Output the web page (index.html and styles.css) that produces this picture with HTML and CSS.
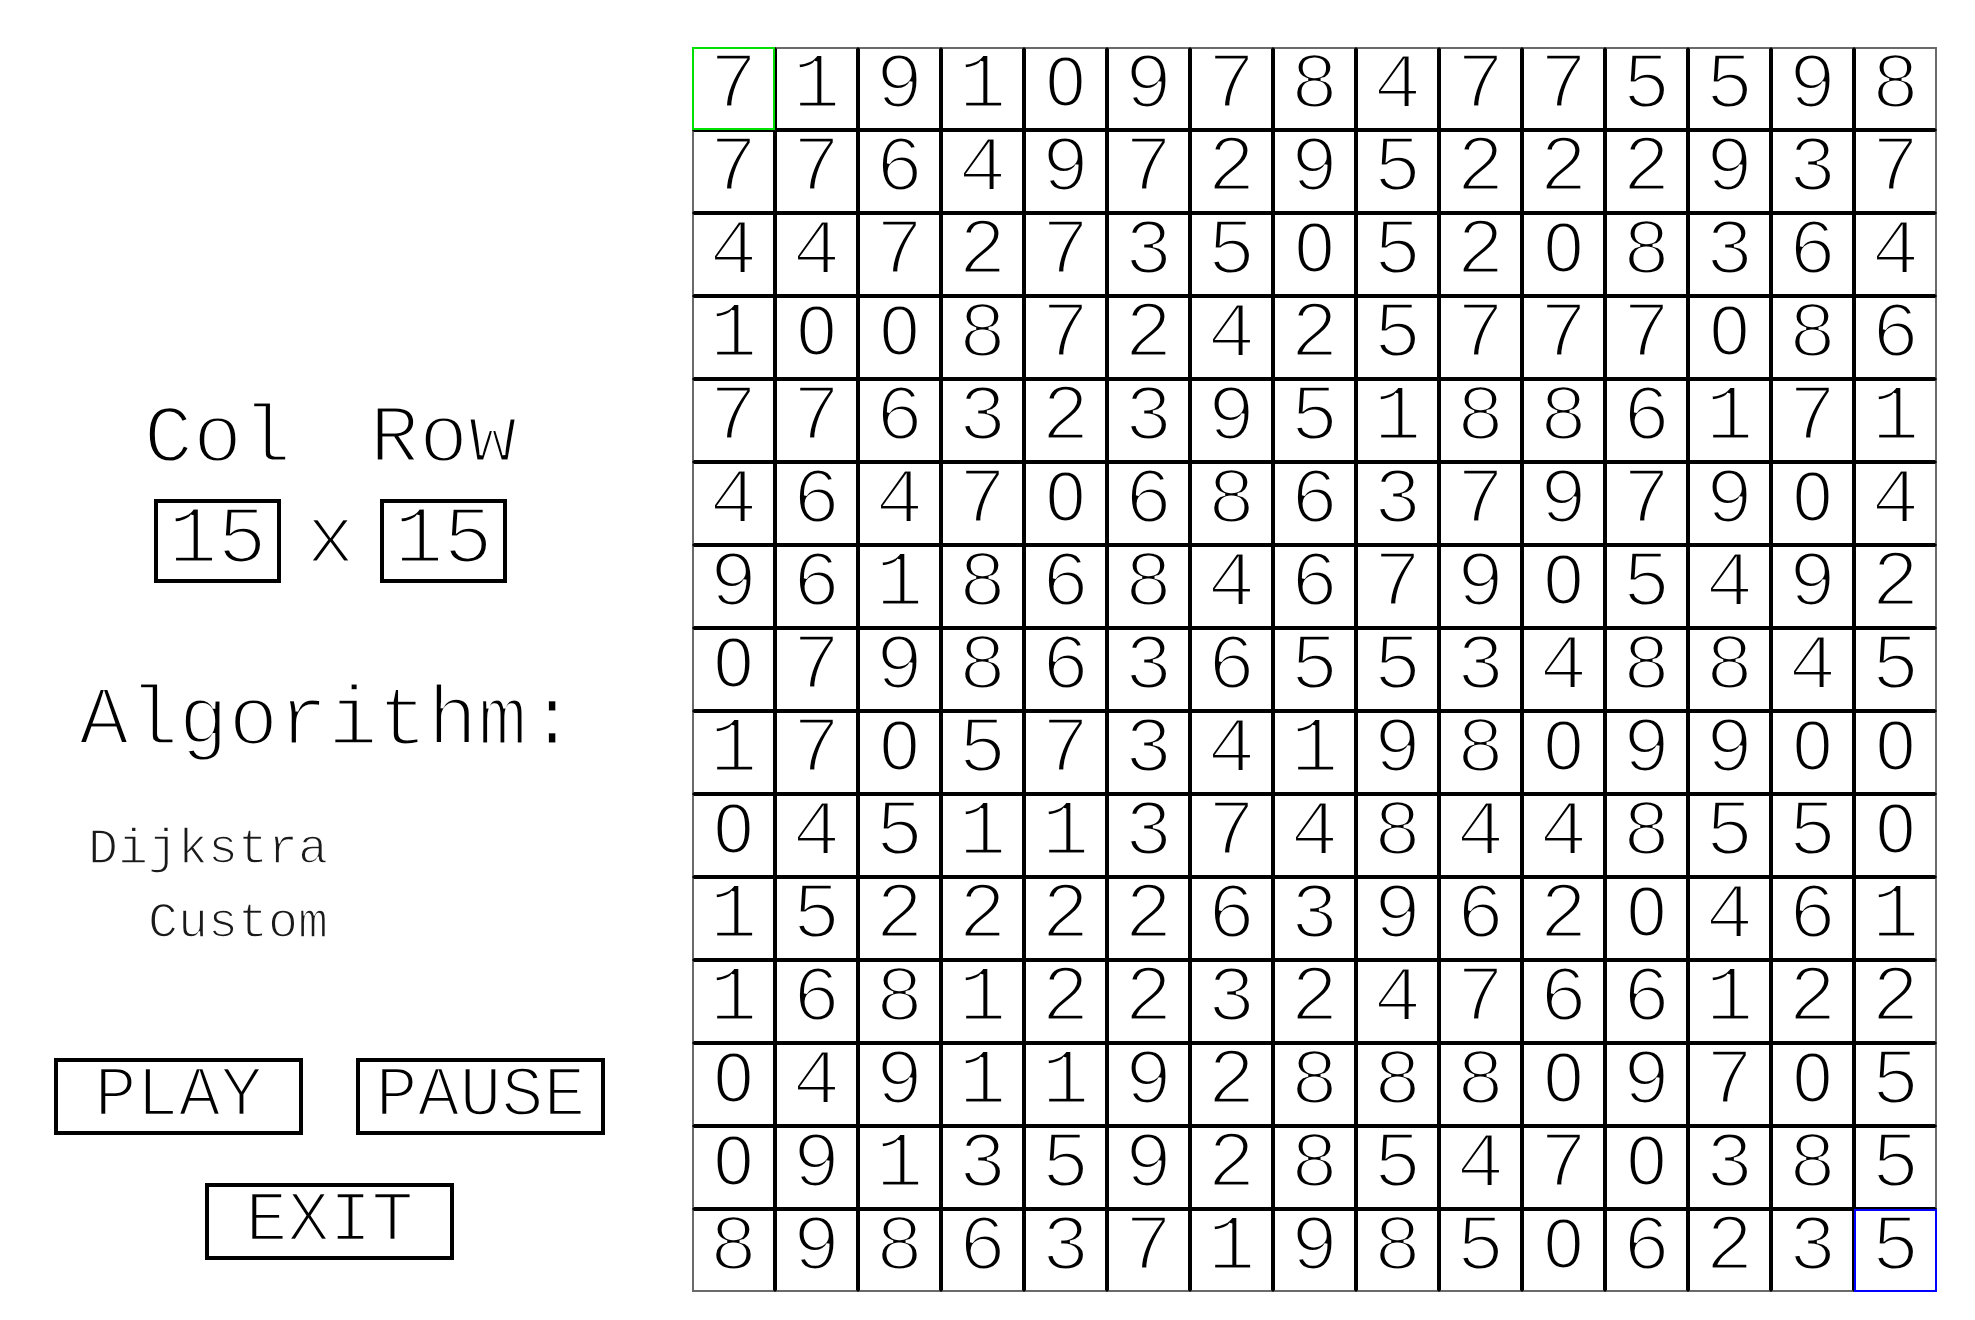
FILE: index.html
```html
<!DOCTYPE html>
<html>
<head>
<meta charset="utf-8">
<link rel="stylesheet" href="styles.css">
</head>
<body>
<div class="app">
  <div class="panel">
    <div class="dims">
      <div class="dim"><div class="dim-label">Col</div><div class="dim-box">15</div></div>
      <div class="times">x</div>
      <div class="dim"><div class="dim-label">Row</div><div class="dim-box">15</div></div>
    </div>
    <div class="algo-title">Algorithm:</div>
    <div class="algo-list">
      <div class="algo-item">Dijkstra</div>
      <div class="algo-item">Custom</div>
    </div>
    <div class="buttons">
      <div class="btn">PLAY</div>
      <div class="btn">PAUSE</div>
    </div>
    <div class="buttons exit-row">
      <div class="btn">EXIT</div>
    </div>
  </div>
  <div class="board">
    <div class="cell start">7</div><div class="cell">1</div><div class="cell">9</div><div class="cell">1</div><div class="cell z">0</div><div class="cell">9</div><div class="cell">7</div><div class="cell">8</div><div class="cell">4</div><div class="cell">7</div><div class="cell">7</div><div class="cell">5</div><div class="cell">5</div><div class="cell">9</div><div class="cell">8</div>
    <div class="cell">7</div><div class="cell">7</div><div class="cell">6</div><div class="cell">4</div><div class="cell">9</div><div class="cell">7</div><div class="cell">2</div><div class="cell">9</div><div class="cell">5</div><div class="cell">2</div><div class="cell">2</div><div class="cell">2</div><div class="cell">9</div><div class="cell">3</div><div class="cell">7</div>
    <div class="cell">4</div><div class="cell">4</div><div class="cell">7</div><div class="cell">2</div><div class="cell">7</div><div class="cell">3</div><div class="cell">5</div><div class="cell z">0</div><div class="cell">5</div><div class="cell">2</div><div class="cell z">0</div><div class="cell">8</div><div class="cell">3</div><div class="cell">6</div><div class="cell">4</div>
    <div class="cell">1</div><div class="cell z">0</div><div class="cell z">0</div><div class="cell">8</div><div class="cell">7</div><div class="cell">2</div><div class="cell">4</div><div class="cell">2</div><div class="cell">5</div><div class="cell">7</div><div class="cell">7</div><div class="cell">7</div><div class="cell z">0</div><div class="cell">8</div><div class="cell">6</div>
    <div class="cell">7</div><div class="cell">7</div><div class="cell">6</div><div class="cell">3</div><div class="cell">2</div><div class="cell">3</div><div class="cell">9</div><div class="cell">5</div><div class="cell">1</div><div class="cell">8</div><div class="cell">8</div><div class="cell">6</div><div class="cell">1</div><div class="cell">7</div><div class="cell">1</div>
    <div class="cell">4</div><div class="cell">6</div><div class="cell">4</div><div class="cell">7</div><div class="cell z">0</div><div class="cell">6</div><div class="cell">8</div><div class="cell">6</div><div class="cell">3</div><div class="cell">7</div><div class="cell">9</div><div class="cell">7</div><div class="cell">9</div><div class="cell z">0</div><div class="cell">4</div>
    <div class="cell">9</div><div class="cell">6</div><div class="cell">1</div><div class="cell">8</div><div class="cell">6</div><div class="cell">8</div><div class="cell">4</div><div class="cell">6</div><div class="cell">7</div><div class="cell">9</div><div class="cell z">0</div><div class="cell">5</div><div class="cell">4</div><div class="cell">9</div><div class="cell">2</div>
    <div class="cell z">0</div><div class="cell">7</div><div class="cell">9</div><div class="cell">8</div><div class="cell">6</div><div class="cell">3</div><div class="cell">6</div><div class="cell">5</div><div class="cell">5</div><div class="cell">3</div><div class="cell">4</div><div class="cell">8</div><div class="cell">8</div><div class="cell">4</div><div class="cell">5</div>
    <div class="cell">1</div><div class="cell">7</div><div class="cell z">0</div><div class="cell">5</div><div class="cell">7</div><div class="cell">3</div><div class="cell">4</div><div class="cell">1</div><div class="cell">9</div><div class="cell">8</div><div class="cell z">0</div><div class="cell">9</div><div class="cell">9</div><div class="cell z">0</div><div class="cell z">0</div>
    <div class="cell z">0</div><div class="cell">4</div><div class="cell">5</div><div class="cell">1</div><div class="cell">1</div><div class="cell">3</div><div class="cell">7</div><div class="cell">4</div><div class="cell">8</div><div class="cell">4</div><div class="cell">4</div><div class="cell">8</div><div class="cell">5</div><div class="cell">5</div><div class="cell z">0</div>
    <div class="cell">1</div><div class="cell">5</div><div class="cell">2</div><div class="cell">2</div><div class="cell">2</div><div class="cell">2</div><div class="cell">6</div><div class="cell">3</div><div class="cell">9</div><div class="cell">6</div><div class="cell">2</div><div class="cell z">0</div><div class="cell">4</div><div class="cell">6</div><div class="cell">1</div>
    <div class="cell">1</div><div class="cell">6</div><div class="cell">8</div><div class="cell">1</div><div class="cell">2</div><div class="cell">2</div><div class="cell">3</div><div class="cell">2</div><div class="cell">4</div><div class="cell">7</div><div class="cell">6</div><div class="cell">6</div><div class="cell">1</div><div class="cell">2</div><div class="cell">2</div>
    <div class="cell z">0</div><div class="cell">4</div><div class="cell">9</div><div class="cell">1</div><div class="cell">1</div><div class="cell">9</div><div class="cell">2</div><div class="cell">8</div><div class="cell">8</div><div class="cell">8</div><div class="cell z">0</div><div class="cell">9</div><div class="cell">7</div><div class="cell z">0</div><div class="cell">5</div>
    <div class="cell z">0</div><div class="cell">9</div><div class="cell">1</div><div class="cell">3</div><div class="cell">5</div><div class="cell">9</div><div class="cell">2</div><div class="cell">8</div><div class="cell">5</div><div class="cell">4</div><div class="cell">7</div><div class="cell z">0</div><div class="cell">3</div><div class="cell">8</div><div class="cell">5</div>
    <div class="cell">8</div><div class="cell">9</div><div class="cell">8</div><div class="cell">6</div><div class="cell">3</div><div class="cell">7</div><div class="cell">1</div><div class="cell">9</div><div class="cell">8</div><div class="cell">5</div><div class="cell z">0</div><div class="cell">6</div><div class="cell">2</div><div class="cell">3</div><div class="cell goal">5</div>
  </div>
</div>
</body>
</html>
```

FILE: styles.css
```css
html, body {
  margin: 0;
  padding: 0;
  background: #ffffff;
}

body {
  font-family: "Liberation Mono", "Courier New", monospace;
  color: #000000;
}

.app {
  display: flex;
  align-items: flex-start;
  width: 1975px;
  height: 1320px;
}

.panel {
  width: 692px;
  flex: none;
  display: flex;
  flex-direction: column;
}

.dims {
  display: flex;
  align-items: flex-end;
  padding-left: 154px;
  margin-top: 399px;
}

.dim {
  width: 127px;
  display: flex;
  flex-direction: column;
  align-items: center;
}

.dim-label {
  font-size: 82px;
  line-height: 82px;
  height: 82px;
  white-space: nowrap;
  -webkit-text-stroke: 3px #fff;
}

.dim-box {
  margin-top: 18px;
  width: 127px;
  height: 84px;
  box-sizing: border-box;
  border: 4px solid #000;
  font-size: 82px;
  line-height: 1;
  display: flex;
  align-items: center;
  justify-content: center;
  -webkit-text-stroke: 3px #fff;
}

.times {
  width: 99px;
  height: 84px;
  font-size: 82px;
  line-height: 1;
  display: flex;
  align-items: center;
  justify-content: center;
  -webkit-text-stroke: 3px #fff;
}

.algo-title {
  margin-top: 99px;
  padding-left: 79px;
  font-size: 83px;
  line-height: 80px;
  height: 80px;
  white-space: nowrap;
  -webkit-text-stroke: 3px #fff;
}

.algo-list {
  margin-top: 51px;
  width: 328px;
  text-align: right;
}

.algo-item {
  font-size: 50px;
  line-height: 74px;
  height: 74px;
  color: #1a1a1a;
  -webkit-text-stroke: 1.5px #fff;
}

.buttons {
  margin-top: 97px;
  display: flex;
  gap: 53px;
  padding-left: 54px;
}

.exit-row {
  margin-top: 48px;
  padding-left: 205px;
}

.btn {
  width: 249px;
  height: 77px;
  box-sizing: border-box;
  border: 4px solid #000;
  font-size: 70px;
  line-height: 1;
  display: flex;
  align-items: center;
  justify-content: center;
  -webkit-text-stroke: 2.5px #fff;
}

.board {
  margin-top: 47px;
  display: grid;
  grid-template-columns: repeat(15, 83px);
  grid-auto-rows: 83px;
}

.cell {
  box-sizing: border-box;
  border: 2px solid #000;
  display: flex;
  align-items: center;
  justify-content: center;
  font-size: 80px;
  line-height: 1;
  padding-bottom: 6px;
  -webkit-text-stroke: 3px #fff;
}

.cell.z {
  font-family: "Liberation Sans", Arial, sans-serif;
  font-size: 71px;
  padding-bottom: 14px;
  -webkit-text-stroke: 2px #fff;
}

.cell:nth-child(-n+15) { border-top-color: #6a6a6a; }
.cell:nth-child(15n+1) { border-left-color: #6a6a6a; }
.cell:nth-child(15n) { border-right-color: #6a6a6a; }
.cell:nth-last-child(-n+15) { border-bottom-color: #6a6a6a; }

.cell.start { border-color: #00e000; }
.cell.goal { border-color: #0000ff; }
```
